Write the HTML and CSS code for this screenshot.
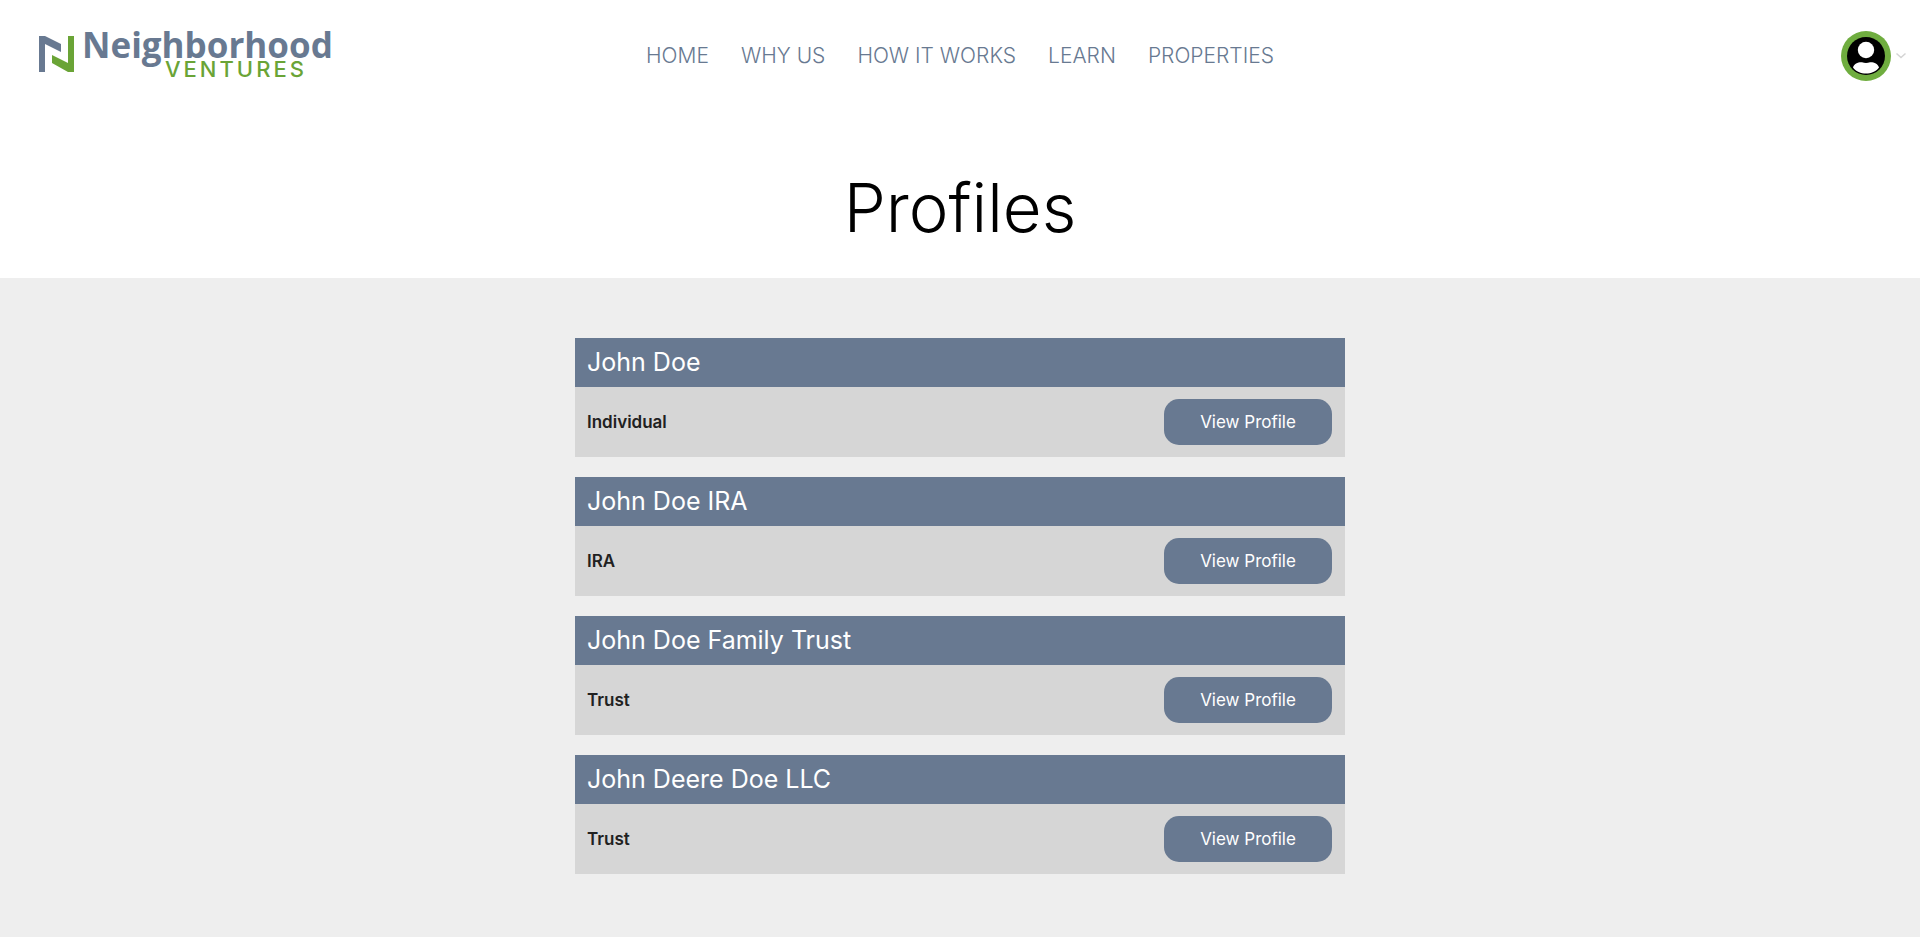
FILE: index.html
```html
<!DOCTYPE html>
<html lang="en">
  <head>
    <meta charset="utf-8">
    <title>Profiles | Neighborhood Ventures</title>
    <meta name="viewport" content="width=device-width, initial-scale=1">
    <link rel="stylesheet" href="styles.css">
  </head>
  <body>
    <header class="header">
      <a class="logo" href="#" aria-label="Neighborhood Ventures">
        <svg width="300" height="60" viewBox="0 0 300 60">
          <path fill="#687991" d="M0 10H6L22 18V26L6 18V46H0Z"/>
          <path fill="#6aa436" d="M35 10V46H29L13 37V29L29 37V10Z"/>
          <text class="logo-name" x="43" y="32">Neighborhood</text>
          <text class="logo-sub" x="126" y="51">VENTURES</text>
        </svg>
      </a>
      <nav class="nav">
        <a href="#">HOME</a>
        <a href="#">WHY US</a>
        <a href="#">HOW IT WORKS</a>
        <a href="#">LEARN</a>
        <a href="#">PROPERTIES</a>
      </nav>
      <button class="account" type="button" aria-label="Account menu">
        <svg width="50" height="50" viewBox="0 0 50 50">
          <circle cx="25" cy="25" r="25" fill="#6fad3f"/>
          <circle cx="25" cy="25" r="19" fill="#000"/>
          <circle cx="25" cy="19" r="8.2" fill="#fff"/>
          <path fill="#fff" d="M12 36.500C13 32.500 17 31 21 31.200Q25 32.600 29 31.200C33 31 37 32.500 38 36.500C35 40.500 30 42.500 25 42.500S15 40.500 12 36.500Z"/>
        </svg>
        <svg width="12" height="8" viewBox="0 0 12 8">
          <path d="M1.500 1.500L6 5.500L10.500 1.500" fill="none" stroke="#d4d4d4" stroke-width="1.500"/>
        </svg>
      </button>
    </header>

    <h1 class="title">Profiles</h1>

    <main class="content">
      <div class="profiles">
        <section class="profile">
          <h2 class="profile-name">John Doe</h2>
          <div class="profile-body">
            <span class="profile-type">Individual</span>
            <button class="button" type="button">View Profile</button>
          </div>
        </section>
        <section class="profile">
          <h2 class="profile-name">John Doe IRA</h2>
          <div class="profile-body">
            <span class="profile-type">IRA</span>
            <button class="button" type="button">View Profile</button>
          </div>
        </section>
        <section class="profile">
          <h2 class="profile-name">John Doe Family Trust</h2>
          <div class="profile-body">
            <span class="profile-type">Trust</span>
            <button class="button" type="button">View Profile</button>
          </div>
        </section>
        <section class="profile">
          <h2 class="profile-name">John Deere Doe LLC</h2>
          <div class="profile-body">
            <span class="profile-type">Trust</span>
            <button class="button" type="button">View Profile</button>
          </div>
        </section>
      </div>
    </main>
  </body>
</html>
```
FILE: styles.css
```css
* {
  box-sizing: border-box;
}

body {
  margin: 0;
  min-height: 100vh;
  display: flex;
  flex-direction: column;
  background-color: #fff;
  color: #212121;
  font-family: Inter, sans-serif;
  font-size: 17px;
}

.header {
  display: grid;
  grid-template-columns: 1fr auto 1fr;
  align-items: center;
  padding: 26px 13px 24px;
}

.logo {
  justify-self: start;
  padding-left: 26px;
}

.logo svg {
  display: block;
  overflow: visible;
}

.logo-name {
  fill: #687991;
  font-family: "Open Sans", sans-serif;
  font-size: 35px;
  font-weight: 700;
}

.logo-sub {
  fill: #6aa436;
  font-family: Inter, sans-serif;
  font-size: 22px;
  font-weight: 500;
  letter-spacing: 3px;
}

.nav {
  display: flex;
  gap: 32px;
}

.nav a {
  color: #687991;
  font-size: 21px;
  font-weight: 300;
  line-height: 24px;
  text-decoration: none;
}

.account {
  justify-self: end;
  display: flex;
  align-items: center;
  gap: 4px;
  padding: 0;
  border: 0;
  background: none;
  cursor: pointer;
}

.title {
  margin: 0;
  padding: 58px 20px 30px;
  color: #000;
  font-size: 67px;
  font-weight: 300;
  line-height: 80px;
  text-align: center;
}

.content {
  flex: 1;
  padding: 60px 20px;
  background-color: #eee;
}

.profiles {
  display: flex;
  flex-direction: column;
  gap: 20px;
  max-width: 770px;
  margin: 0 auto;
}

.profile {
  background-color: #d6d6d6;
}

.profile-name {
  margin: 0;
  padding: 9px 12px 10px;
  background-color: #687991;
  color: #fff;
  font-size: 25px;
  font-weight: 400;
  line-height: 30px;
}

.profile-body {
  display: flex;
  align-items: center;
  justify-content: space-between;
  padding: 12px 13px 12px 12px;
}

.profile-type {
  font-weight: 600;
}

.button {
  width: 168px;
  height: 46px;
  padding: 0;
  border: 0;
  border-radius: 15px;
  background-color: #687991;
  color: #fff;
  font-family: inherit;
  font-size: 17px;
  font-weight: 400;
  cursor: pointer;
}
```
